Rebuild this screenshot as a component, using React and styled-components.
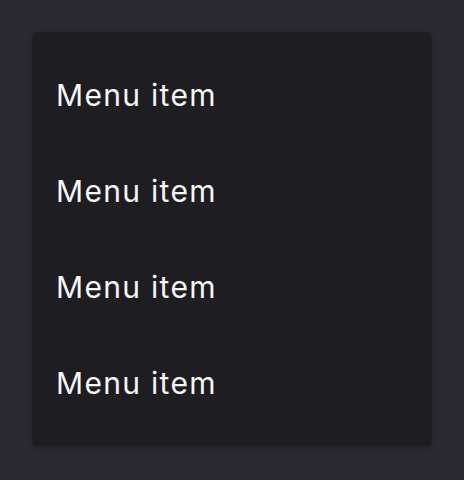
import React from 'react';
import styled, { createGlobalStyle } from 'styled-components';

const GlobalStyle = createGlobalStyle`
  html, body {
    margin: 0;
    padding: 0;
    background: #2b2a33;
    font-family: Inter, "Noto Sans", sans-serif;
  }
`;

const Page = styled.div`
  width: 464px;
  height: 480px;
  padding: 32px;
  box-sizing: border-box;
`;

const Menu = styled.ul`
  list-style: none;
  margin: 0;
  padding: 15px 0;
  width: 400px;
  background: #1e1d22;
  border-radius: 6px;
  box-shadow: 0 2px 6px rgba(0, 0, 0, 0.25);
`;

const Item = styled.li`
  height: 96px;
  display: flex;
  align-items: center;
  padding: 0 24px;
  color: #f5f5f7;
  font-size: 30px;
  letter-spacing: 1.3px;
  cursor: pointer;
`;

const items = ['Menu item', 'Menu item', 'Menu item', 'Menu item'];

export default function App() {
  return (
    <>
      <GlobalStyle />
      <Page>
        <Menu>
          {items.map((label, key) => (
            <Item key={key}>{label}</Item>
          ))}
        </Menu>
      </Page>
    </>
  );
}
